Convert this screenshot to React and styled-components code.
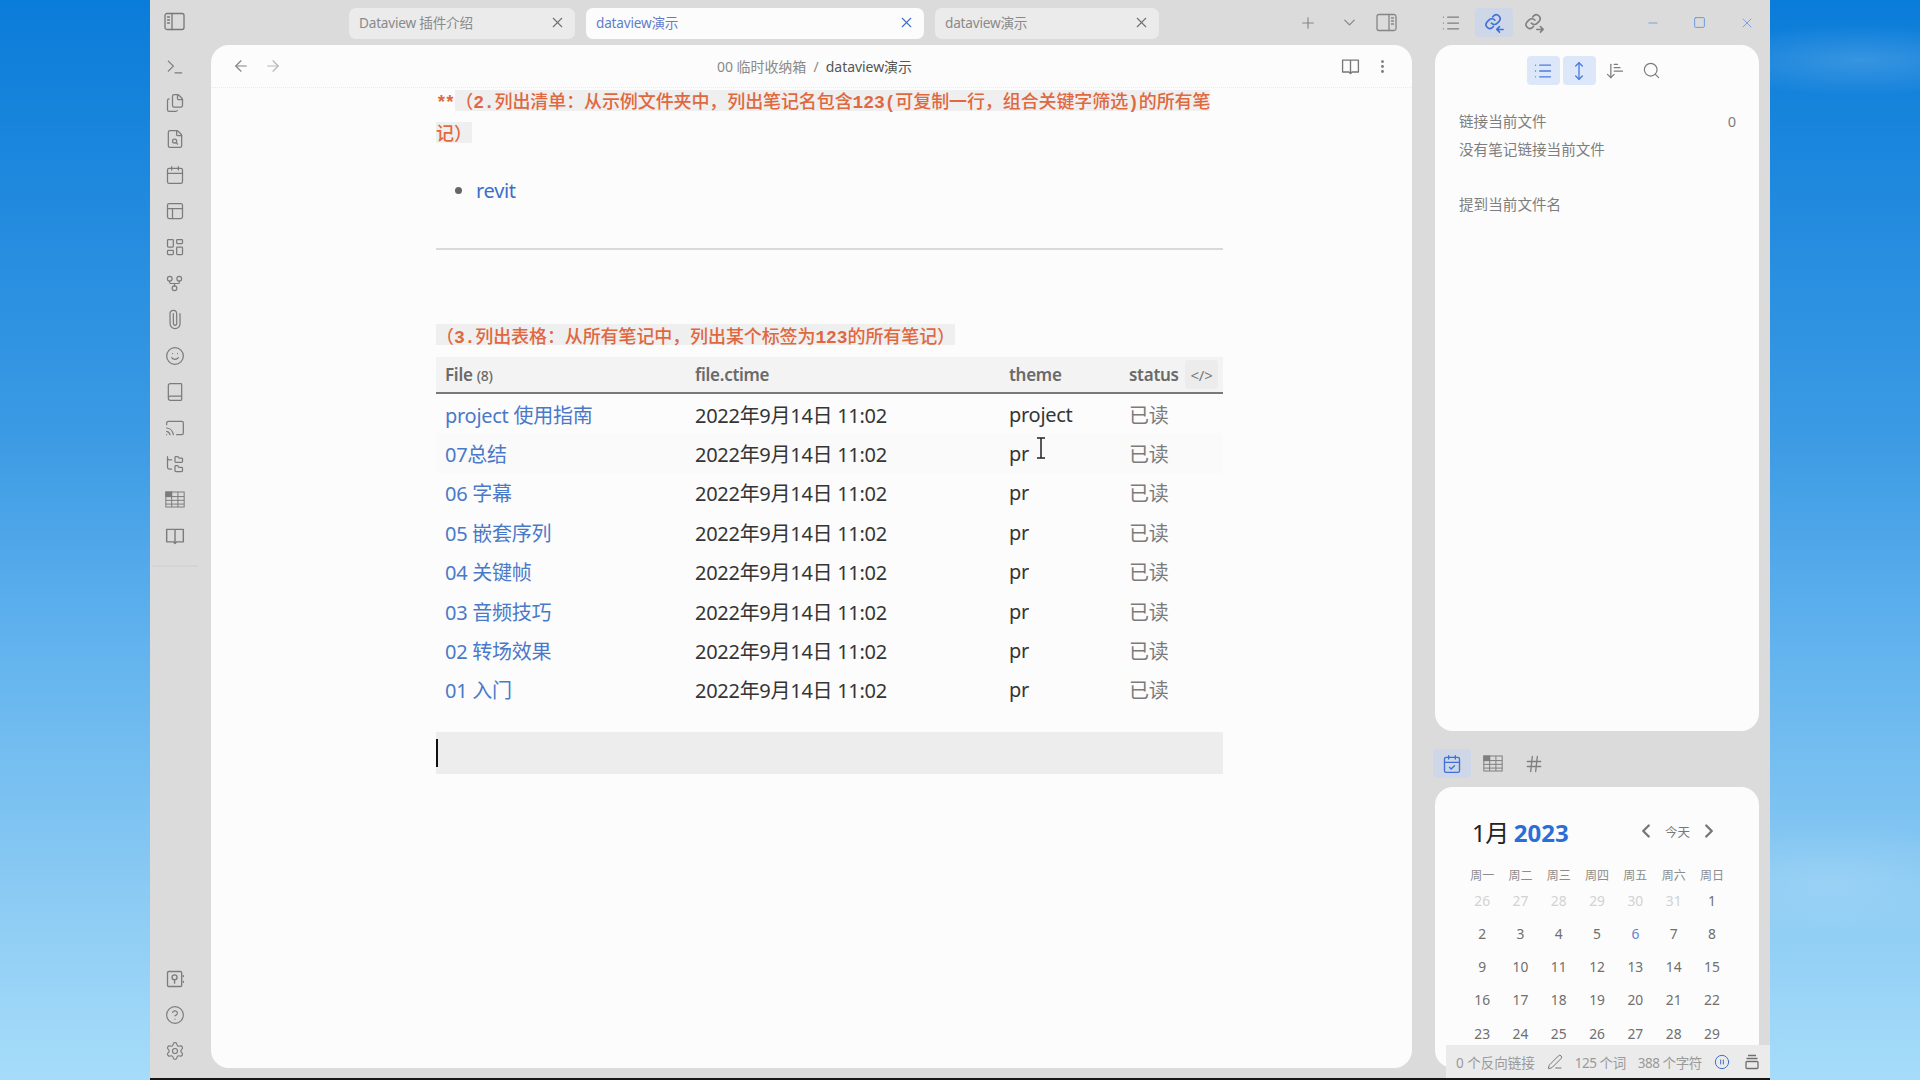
import React from "react";
import styled, { createGlobalStyle } from "styled-components";
import {
  ArrowDownNarrowWide, ArrowLeft, ArrowRight, Book, Calendar, CalendarCheck, Cast, ChevronDown,
  ChevronLeft, ChevronRight, CircleHelp, CirclePause, EllipsisVertical, FileSearch, Files, FolderTree, GitFork, Hash,
  LayoutDashboard, List, Minus, MoveVertical, Paperclip, PanelsTopLeft, PenLine, Plus, Search, Settings, Smile, Square, Terminal, X,
} from "lucide-react";

const SANS = `"Noto Sans", "Noto Sans CJK SC", sans-serif`;

const Global = createGlobalStyle`
  html, body { margin: 0; padding: 0; }
  body { font-family: ${SANS}; }
  * { box-sizing: border-box; }
`;

const Desktop = styled.div`
  width: 1920px; height: 1080px; overflow: hidden; display: flex; justify-content: center;
  background:
    radial-gradient(ellipse 170px 36px at 1860px 60px, rgba(255,255,255,.16), transparent),
    radial-gradient(ellipse 170px 60px at 1830px 880px, rgba(255,255,255,.14), transparent),
    linear-gradient(180deg, #0a7cd9 0%, #3b9ae4 40%, #62b3ee 60%, #8fcdf4 85%, #a6dcfa 100%);
`;
const Win = styled.div`
  position: relative; width: 1620px; height: 1080px; display: flex; background: #dbdbdb;
  border-bottom: 2px solid #161616; color: #777;
`;
const Ribbon = styled.nav`
  width: 61px; flex: none; display: flex; flex-direction: column; align-items: center; padding: 0 12px 9px 0;
`;
const RibbonTop = styled.div`
  height: 49px; flex: none; width: 100%; display: flex; justify-content: center; padding-top: 11px; align-items: flex-start;
`;
const RibbonItem = styled.div`
  height: 36.07px; flex: none; display: flex; align-items: center; justify-content: center; color: #7c7c7c;
`;
const RibbonRule = styled.div`
  width: 46px; height: 2px; margin-top: 11px; background: #d4d4d4; flex: none;
`;
const RibbonBottom = styled.div`
  margin-top: auto; display: flex; flex-direction: column;
`;
const Clip = styled(Paperclip)`
  transform: rotate(-45deg) scale(1.05);
`;
const Center = styled.div`
  width: 1201px; flex: none; display: flex; flex-direction: column;
`;
const TabStrip = styled.div`
  height: 45px; flex: none; display: flex; align-items: flex-start; padding: 8px 15px 0 138px; gap: 11px;
`;
const Tab = styled.div`
  width: ${p => p.$w}px; height: 31px; flex: none; display: flex; align-items: center; justify-content: space-between;
  padding: 0 9px 3px 10px; border-radius: 7px; font-size: 13.6px; letter-spacing: -.2px;
  background: ${p => (p.$active ? "#fcfcfc" : "#ebebeb")};
  color: ${p => (p.$active ? "#5f7fcb" : "#8a8a8a")};
  svg { color: ${p => (p.$active ? "#3f6fc4" : "#6f6f6f")}; }
`;
const TabTools = styled.div`
  margin-left: auto; display: flex; align-items: center; height: 29px; gap: 17px; color: #858585;
`;
const AddTab = styled(Plus)`
  margin-right: 6px;
`;
const Pane = styled.main`
  flex: none; height: 1023px; background: #fcfcfc; border-radius: 18px; display: flex; flex-direction: column; overflow: hidden;
`;
const NavBar = styled.header`
  height: 43px; flex: none; display: flex; align-items: center; padding: 0 21px 0 21px; position: relative;
  border-bottom: 1px dotted #e9e9e9; color: #828282;
`;
const NavArrows = styled.div`
  display: flex; gap: 14px;
  svg:last-child { color: #b5b5b5; }
`;
const Crumbs = styled.div`
  flex: 1; text-align: center; font-size: 14px; color: #8a8a8a; padding-left: 6px; white-space: nowrap; letter-spacing: -.05px;
`;
const CrumbLast = styled.span`
  color: #555;
`;
const NavTools = styled.div`
  display: flex; gap: 14px; align-items: center; color: #777;
`;
const Content = styled.article`
  padding-left: 225px; width: 1012px;
`;
const RedHeading = styled.p`
  margin: ${p => p.$top}px 0 0; font-size: 18px; line-height: 32px; font-weight: 500; color: #e0683f; letter-spacing: -.1px;
  white-space: nowrap; font-family: "Noto Sans CJK SC", "Liberation Mono", monospace;
`;
const Stars = styled.b`
  font-weight: 700; font-family: "Liberation Mono", monospace; letter-spacing: -2.2px; margin-right: 2px; line-height: 0;
`;
const Mono = styled.b`
  font-weight: 700; font-family: "Liberation Mono", monospace; line-height: 0;
`;
const Mark = styled.span`
  background: linear-gradient(#efefef, #efefef) 0 50% / 100% 21px no-repeat;
`;
const Bullets = styled.ul`
  margin: 26.5px 0 0; padding: 0 0 0 40px; font-size: 20px; line-height: 32px; color: #555; letter-spacing: -.3px;
  li::marker { color: #666; }
`;
const Link = styled.a`
  color: ${p => p.$soft ? "#4a79c9" : "#3a6ecd"}; text-decoration: none;
`;
const Rule = styled.hr`
  margin: 41px 0 0; border: 0; height: 2px; background: #d9d9d9;
`;
const Table = styled.section`
  margin-top: 6.5px; width: 787px;
`;
const Row = styled.div`
  display: grid; grid-template-columns: 250px 314px 120px 103px; height: 39.4px; align-items: center; letter-spacing: -.28px;
  font-size: 20px; color: #353535; white-space: nowrap; background: ${p => p.$hover ? "#fafafa" : "transparent"};
  padding-top: 1px;
`;
const HeadRow = styled(Row)`
  height: 37px; font-size: 17px; font-weight: 600; color: #6a6a6a; background: #f3f3f3; border-bottom: 2px solid #77797c; position: relative;
  padding-top: 0;
`;
const Cell = styled.div`
  padding-left: 9px; position: relative;
  color: ${p => p.$color || "inherit"};
`;
const Count = styled.span`
  font-size: 14px; font-weight: 500;
`;
const CodeBtn = styled.div`
  position: absolute; right: 5px; top: 3px; width: 33px; height: 29px; background: #ececec; border-radius: 3px;
  display: flex; align-items: center; justify-content: center; color: #777; font-size: 15px; font-weight: 400;
`;
const IBeam = styled.svg`
  position: absolute; left: 34px; top: -3px; width: 14px; height: 22px;
`;
const CurrentLine = styled.div`
  margin-top: 23px; height: 42px; background: #ededed; display: flex; align-items: center;
`;
const Caret = styled.div`
  width: 2px; height: 28px; background: #111;
`;
const Side = styled.aside`
  width: 335px; flex: none; margin-left: 23px; display: flex; flex-direction: column;
`;
const SideTop = styled.div`
  height: 45px; flex: none; display: flex; padding-top: 8px; align-items: flex-start; color: #858585;
`;
const SideBtn = styled.div`
  width: ${p => p.$w || 32}px; height: 29px; margin-left: ${p => p.$ml || 0}px; display: flex; align-items: center; justify-content: center;
  border-radius: 4px; background: ${p => p.$active ? "#cdd7e7" : "transparent"}; color: ${p => p.$active ? "#3f70d6" : "#7f7f7f"};
`;
const WinCtrls = styled.div`
  margin-left: auto; display: flex; color: #6a98dc;
`;
const WinCtrl = styled.div`
  width: 47px; height: 29px; display: flex; align-items: center; justify-content: center;
`;
const Card = styled.section`
  width: 324px; flex: none; background: #fcfcfc; border-radius: 18px;
`;
const BacklinkCard = styled(Card)`
  height: 686px; padding-top: 11px;
`;
const PaneTools = styled.div`
  display: flex; justify-content: center; gap: 3px;
`;
const PaneBtn = styled.div`
  width: 33px; height: 29px; border-radius: 4px; display: flex; align-items: center; justify-content: center;
  background: ${p => p.$active ? "#dce7fa" : "transparent"}; color: ${p => p.$active ? "#4a7be0" : "#7c7c7c"};
`;
const SideLine = styled.div`
  display: flex; justify-content: space-between; padding: 0 23px 0 24px; font-size: 14.6px; line-height: 22px; color: #7e7e7e;
  margin-top: ${p => p.$top}px;
`;
const CalTabs = styled.div`
  height: 29px; margin-top: 18px; flex: none; display: flex; margin-left: -2px;
  gap: 3px;
`;
const CalCard = styled(Card)`
  margin-top: 9px; height: 281px; padding: 27px 28px 0; overflow: hidden;
`;
const CalHead = styled.div`
  height: 34px; display: flex; align-items: center; justify-content: space-between; padding: 0 11px 0 9px;
`;
const CalTitle = styled.div`
  font-size: 24px; color: #222; white-space: nowrap; letter-spacing: -.4px;
`;
const Year = styled.b`
  color: #2a6fd8; font-weight: 700; margin-left: -1px; letter-spacing: 0;
`;
const CalNav = styled.div`
  display: flex; align-items: center; gap: 8px; font-size: 12.5px; color: #777;
`;
const CalGrid = styled.div`
  display: grid; grid-template-columns: repeat(7, 38.3px); grid-auto-rows: 33.25px; text-align: center;
  align-items: center; font-size: 13.8px; color: #6f6f6f;
`;
const WeekGrid = styled(CalGrid)`
  margin-top: 19px; grid-auto-rows: 16.4px; font-size: 12px; color: #8c8c8c;
`;
const Day = styled.div`
  color: ${p => p.$muted ? "#d2d2d2" : p.$today ? "#5f82cc" : "inherit"};
`;
const StatusBar = styled.footer`
  position: absolute; right: 0; bottom: 0; width: 324px; height: 33px; background: #ebebeb; display: flex; align-items: center;
  gap: 12px; padding-left: 10px; font-size: 13.5px; color: #9a9a9a; white-space: nowrap;
  svg { color: #6f6f6f; flex: none; }
`;
const StatusCount = styled.span`
  letter-spacing: -.45px;
`;
const StatusPause = styled.span`
  display: flex; margin-right: 2px; svg { color: #3f6fc9; }
`;

const Sheet = ({ size = 20 }) => (
  <svg width={size} height={size * .85} viewBox="0 0 24 20" fill="none" stroke="currentColor" strokeWidth="1.2">
    <rect x="1" y="1" width="22" height="18" />
    <path d="M1 6.5h22M1 11h22M1 15.5h22M8 1v18M15.5 1v18" />
    <rect x="1" y="1" width="7" height="5.5" fill="currentColor" />
  </svg>
);
const PanelIcon = ({ flip }) => (
  <svg width="21" height="21" viewBox="0 0 21 21" fill="none" stroke="currentColor" strokeWidth="1.3" strokeLinecap="round">
    <g transform={flip ? "translate(21 0) scale(-1 1)" : undefined}>
      <rect x="1" y="2.5" width="19" height="16" rx="2" />
      <path d="M8 2.5v16M3.5 6h2M3.5 9h2M3.5 12h2" />
    </g>
  </svg>
);
const LinkArrow = ({ out }) => (
  <svg width="22" height="22" viewBox="0 0 24 24" fill="none" stroke="currentColor" strokeWidth="1.7" strokeLinecap="round" strokeLinejoin="round">
    <path d="M9 12a4.2 4.2 0 0 0 6.3.4l2.5-2.5a4.2 4.2 0 0 0-5.9-5.9l-1.4 1.4" />
    <path d="M13 9a4.2 4.2 0 0 0-6.3-.4l-2.5 2.5a4.2 4.2 0 0 0 5.9 5.9l1.4-1.4" />
    <path d={out ? "M15 19h7M19 16l3 3-3 3" : "M15 19h7M18 16l-3 3 3 3"} />
  </svg>
);
const OpenBook = ({ size = 20 }) => (
  <svg width={size} height={size} viewBox="0 0 24 24" fill="none" stroke="currentColor" strokeWidth="1.7" strokeLinejoin="round" strokeLinecap="round">
    <path d="M2 4h20v15h-8l-2 2-2-2H2zM12 4v17" />
  </svg>
);
const Vault = () => (
  <svg width="20" height="20" viewBox="0 0 24 24" fill="none" stroke="currentColor" strokeWidth="1.6" strokeLinecap="round">
    <rect x="3" y="3" width="17" height="18" rx="1.5" />
    <circle cx="11.5" cy="10" r="3" />
    <path d="M11.5 13v4M22 8v1M22 15v1" />
  </svg>
);
const Stack = () => (
  <svg width="16" height="16" viewBox="0 0 16 16" fill="none" stroke="currentColor" strokeWidth="1.3">
    <path d="M4 1.5h8M2.5 4.5h11" />
    <rect x="2" y="7.5" width="12" height="7" rx="1" />
  </svg>
);

const ribbon = [
  <Terminal size={20} strokeWidth={1.5} />, <Files size={20} strokeWidth={1.5} />, <FileSearch size={20} strokeWidth={1.5} />,
  <Calendar size={20} strokeWidth={1.5} />, <PanelsTopLeft size={20} strokeWidth={1.5} />, <LayoutDashboard size={20} strokeWidth={1.5} />,
  <GitFork size={19} strokeWidth={1.5} />, <Clip size={19} strokeWidth={1.5} />, <Smile size={20} strokeWidth={1.5} />,
  <Book size={20} strokeWidth={1.5} />, <Cast size={20} strokeWidth={1.5} />, <FolderTree size={20} strokeWidth={1.5} />,
  <Sheet />, <OpenBook />,
];
const rows = ["project 使用指南", "07总结", "06 字幕", "05 嵌套序列", "04 关键帧", "03 音频技巧", "02 转场效果", "01 入门"];
const weeks = ["周一", "周二", "周三", "周四", "周五", "周六", "周日"];
const days = [
  [26, 27, 28, 29, 30, 31].map(d => ({ d, muted: true })),
  Array.from({ length: 28 }, (_, i) => ({ d: i + 1, today: i === 5 })),
  [29].map(d => ({ d })),
].flat();

export default function App() {
  return (
    <Desktop>
      <Global />
      <Win>
        <Ribbon>
          <RibbonTop><PanelIcon /></RibbonTop>
          {ribbon.map((icon, i) => <RibbonItem key={i}>{icon}</RibbonItem>)}
          <RibbonRule />
          <RibbonBottom>
            <RibbonItem><Vault /></RibbonItem>
            <RibbonItem><CircleHelp size={20} strokeWidth={1.4} /></RibbonItem>
            <RibbonItem><Settings size={20} strokeWidth={1.4} /></RibbonItem>
          </RibbonBottom>
        </Ribbon>

        <Center>
          <TabStrip>
            <Tab $w={226}>Dataview 插件介绍<X size={17} strokeWidth={1.6} /></Tab>
            <Tab $w={338} $active>dataview演示<X size={17} strokeWidth={1.6} /></Tab>
            <Tab $w={224}>dataview演示<X size={17} strokeWidth={1.6} /></Tab>
            <TabTools>
              <AddTab size={18} strokeWidth={1.5} />
              <ChevronDown size={19} strokeWidth={1.5} />
              <PanelIcon flip />
            </TabTools>
          </TabStrip>
          <Pane>
            <NavBar>
              <NavArrows>
                <ArrowLeft size={18} strokeWidth={1.5} />
                <ArrowRight size={18} strokeWidth={1.5} />
              </NavArrows>
              <Crumbs>00 临时收纳箱&nbsp; / &nbsp;<CrumbLast>dataview演示</CrumbLast></Crumbs>
              <NavTools>
                <OpenBook size={19} />
                <EllipsisVertical size={17} strokeWidth={2} />
              </NavTools>
            </NavBar>
            <Content>
              <RedHeading $top={-4}>
                <Stars>**</Stars><Mark>（<Mono>2.</Mono>列出清单：从示例文件夹中，列出笔记名包含<Mono>123(</Mono>可复制一行，组合关键字筛选<Mono>)</Mono>的所有笔</Mark><br />
                <Mark>记）</Mark>
              </RedHeading>
              <Bullets><li><Link href="#">revit</Link></li></Bullets>
              <Rule />
              <RedHeading $top={69}><Mark>（<Mono>3.</Mono>列出表格：从所有笔记中，列出某个标签为<Mono>123</Mono>的所有笔记）</Mark></RedHeading>
              <Table>
                <HeadRow>
                  <Cell>File <Count>(8)</Count></Cell>
                  <Cell>file.ctime</Cell>
                  <Cell>theme</Cell>
                  <Cell>status</Cell>
                  <CodeBtn>&lt;/&gt;</CodeBtn>
                </HeadRow>
                {rows.map((name, i) => (
                  <Row key={name} $hover={i === 1}>
                    <Cell><Link href="#" $soft>{name}</Link></Cell>
                    <Cell>2022年9月14日 11:02</Cell>
                    <Cell>
                      {i === 0 ? "project" : "pr"}
                      {i === 1 && (
                        <IBeam viewBox="0 0 14 22" fill="none" stroke="#222" strokeWidth="1.5">
                          <path d="M3 1h8M7 1v20M3 21h8" />
                        </IBeam>
                      )}
                    </Cell>
                    <Cell $color="#7b7b7b">已读</Cell>
                  </Row>
                ))}
              </Table>
              <CurrentLine><Caret /></CurrentLine>
            </Content>
          </Pane>
        </Center>

        <Side>
          <SideTop>
            <SideBtn><List size={20} strokeWidth={1.5} /></SideBtn>
            <SideBtn $w={38} $ml={8} $active><LinkArrow /></SideBtn>
            <SideBtn $ml={5}><LinkArrow out /></SideBtn>
            <WinCtrls>
              <WinCtrl><Minus size={14} strokeWidth={1.5} /></WinCtrl>
              <WinCtrl><Square size={13} strokeWidth={1.8} /></WinCtrl>
              <WinCtrl><X size={16} strokeWidth={1.3} /></WinCtrl>
            </WinCtrls>
          </SideTop>
          <BacklinkCard>
            <PaneTools>
              <PaneBtn $active><List size={20} strokeWidth={1.6} /></PaneBtn>
              <PaneBtn $active><MoveVertical size={20} strokeWidth={1.6} /></PaneBtn>
              <PaneBtn><ArrowDownNarrowWide size={20} strokeWidth={1.5} /></PaneBtn>
              <PaneBtn><Search size={19} strokeWidth={1.5} /></PaneBtn>
            </PaneTools>
            <SideLine $top={25}><span>链接当前文件</span><span>0</span></SideLine>
            <SideLine $top={6}>没有笔记链接当前文件</SideLine>
            <SideLine $top={33}>提到当前文件名</SideLine>
          </BacklinkCard>
          <CalTabs>
            <SideBtn $w={38} $active><CalendarCheck size={20} strokeWidth={1.6} /></SideBtn>
            <SideBtn $w={38}><Sheet /></SideBtn>
            <SideBtn $w={38}><Hash size={20} strokeWidth={1.6} /></SideBtn>
          </CalTabs>
          <CalCard>
            <CalHead>
              <CalTitle>1月 <Year>2023</Year></CalTitle>
              <CalNav>
                <ChevronLeft size={22} strokeWidth={2.6} />
                今天
                <ChevronRight size={22} strokeWidth={2.6} />
              </CalNav>
            </CalHead>
            <WeekGrid>{weeks.map(w => <div key={w}>{w}</div>)}</WeekGrid>
            <CalGrid>
              {days.map((x, i) => <Day key={i} $muted={x.muted} $today={x.today}>{x.d}</Day>)}
            </CalGrid>
          </CalCard>
        </Side>

        <StatusBar>
          <span>0 个反向链接</span>
          <PenLine size={16} strokeWidth={1.4} />
          <StatusCount>125 个词</StatusCount>
          <StatusCount>388 个字符</StatusCount>
          <StatusPause><CirclePause size={16} strokeWidth={1.5} /></StatusPause>
          <Stack />
        </StatusBar>
      </Win>
    </Desktop>
  );
}
